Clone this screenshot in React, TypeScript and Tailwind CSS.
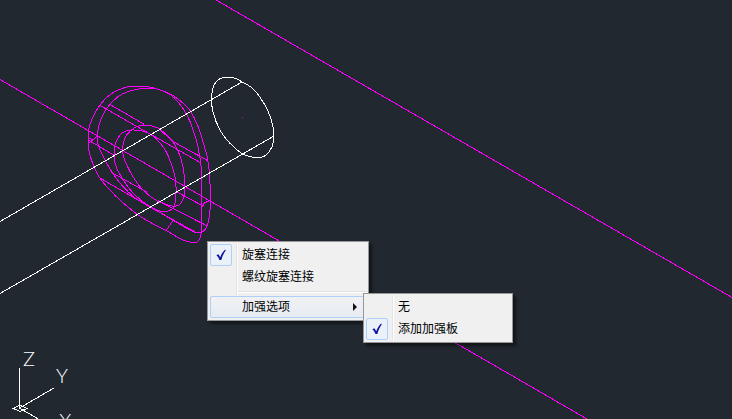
import React from "react";

type Point = [number, number];

/** Smooth closed curve through the given points (Catmull-Rom converted to Béziers). */
function smooth(points: Point[]): string {
  const n = points.length;
  const at = (i: number): Point => points[(i + n) % n];
  let d = `M${points[0][0]} ${points[0][1]}`;
  for (let i = 0; i < n; i++) {
    const [a, b, c, e] = [at(i - 1), at(i), at(i + 1), at(i + 2)];
    d += `C${b[0] + (c[0] - a[0]) / 6} ${b[1] + (c[1] - a[1]) / 6} ${c[0] - (e[0] - b[0]) / 6} ${c[1] - (e[1] - b[1]) / 6} ${c[0]} ${c[1]}`;
  }
  return d;
}

const backPlate: Point[] = [
  [88.5, 140], [89, 128], [93, 117], [100, 105], [111, 94], [125, 87.5], [135, 86.3], [147, 86.7],
  [159, 89.5], [171.5, 95.5], [183, 108.5], [190, 121.5], [196.5, 141], [200, 158], [201.4, 172],
  [201.4, 205], [201.4, 230], [200, 238], [196.5, 242.3], [191.5, 242.5], [181.5, 239.3],
  [166.5, 230.7], [155, 225], [138.3, 215], [121.7, 201.7], [108.3, 188.3], [100, 178.3],
  [95, 169.3], [91.5, 160], [88.8, 150],
];

const frontPlate: Point[] = [
  [97.4, 138], [98, 130], [100, 121.7], [106.5, 108.5], [118, 96.7], [128, 91.7], [141.7, 88.6],
  [155, 88.6], [170, 94], [178.3, 99.3], [190, 110.5], [198, 126.5], [203, 141.7], [207.5, 158.5],
  [209.4, 173], [210.4, 200], [209.3, 216.7], [206.7, 226.7], [201.7, 232.3], [193.3, 231.7],
  [175, 221.3], [150, 206.7], [135, 198], [121.7, 185], [111.7, 171.7], [105, 160], [98.5, 146],
];

const backHole: Point[] = [
  [114.3, 153.3], [115, 145], [120, 135], [126.7, 130.7], [134, 130], [141.7, 131], [151, 134.5],
  [161.7, 145], [168.3, 156], [175, 176.7], [176, 193], [174, 206.7], [169, 210.7],
  [161.7, 211.4], [150, 206.7], [135, 195], [123.3, 180], [115.5, 165],
];

const frontHole: Point[] = [
  [122.7, 151.7], [123.3, 143.3], [126.7, 135], [135, 127.5], [145, 125.4], [156.7, 127.5],
  [166.7, 135], [175, 145], [181, 159], [184.4, 176.7], [184.4, 193], [181, 203],
  [175, 206.4], [166.7, 204.5], [156.7, 200.7], [143, 190], [133, 176.7], [125, 161],
];

const boltEnd: Point[] = [
  [241.7, 81.7], [235, 78.2], [227.5, 77.2], [220, 78.7], [214, 85], [211.6, 97], [213, 112],
  [220, 130], [230, 143.3], [241.7, 153.3], [253, 157.3], [263, 156.8], [269.3, 151.7],
  [273.4, 141.7], [273, 127], [268.3, 111.7], [260, 97.3], [251.7, 87.7],
];

const plateEdges =
  "M100 105.5L151 134.5L200 162.5M110 104.5L144.5 124.5M159 129L173 141.5L207.7 160.7" +
  "M89 138L92 139.5M89 143L97.5 136M89 140.5L114.5 155.5M111.5 172.5L146.7 192M100 178L150 207L197 233" +
  "M176 191.5L203 206L205 202M202 207L204 203L210.5 200.5M158 200.7L206.7 225.7M173.3 220L166 230.7";

function Drawing() {
  return (
    <svg
      className="absolute inset-0 h-full w-full"
      viewBox="0 0 732 419"
      preserveAspectRatio="xMinYMin slice"
      fill="none"
      aria-hidden="true"
    >
      <g stroke="#ff00ff" shapeRendering="crispEdges">
        <path d="M216 0L732 297.5M0 79.5L587 419" />
        <path d={smooth(backPlate)} />
        <path d={smooth(frontPlate)} />
        <path d={smooth(backHole)} />
        <path d={smooth(frontHole)} />
        <path d={plateEdges} />
      </g>
      <g stroke="#ffffff" shapeRendering="crispEdges">
        <path d="M0 221.5L242 82M0 293.5L274 136" />
        <path d={smooth(boltEnd)} />
        <path d="M19.5 368V408M19.5 408L54 388M19.5 408L40 420M13.5 408.5L20 405L27 408.5L20 411.5Z" />
      </g>
      <rect x="242" y="117" width="1" height="1" fill="#c000c0" />
      <g fill="#ffffff" className="font-['Lato',sans-serif] text-[20px] font-light">
        <text x="23" y="366">Z</text>
        <text x="56" y="383">Y</text>
        <text x="59" y="428">X</text>
      </g>
    </svg>
  );
}

function Check() {
  return (
    <svg viewBox="0 0 20 20" className="size-5" aria-hidden="true">
      <path d="M5.4 10.2L7.4 9.2L9.2 12.2C10.4 9.2 12 6.6 14.2 4.6L14.8 5.2C12.8 8 11.4 11.2 10.3 15H8.5C7.8 13 6.8 11.4 5.4 10.2Z" fill="#0c12a1" />
    </svg>
  );
}

type ItemProps = { label: string; checked?: boolean; submenu?: boolean };

function MenuItem({ label, checked = false, submenu = false }: ItemProps) {
  return (
    <button
      type="button"
      role={submenu ? "menuitem" : "menuitemcheckbox"}
      aria-checked={submenu ? undefined : checked}
      aria-haspopup={submenu ? "menu" : undefined}
      aria-expanded={submenu ? true : undefined}
      className={
        submenu
          ? "relative flex h-[22px] w-full items-center rounded-xs border border-[#aecff7] bg-linear-to-b from-[#f0f1f3] to-[#e7ecf3] text-left"
          : "relative flex h-[22px] w-full items-center border border-transparent text-left"
      }
    >
      <span
        className={
          checked
            ? "-ml-px flex size-[22px] shrink-0 items-center justify-center rounded-xs border border-[#aecff7] bg-[#ebf1f9]"
            : "-ml-px size-[22px] shrink-0"
        }
      >
        {checked && <Check />}
      </span>
      <span className="ml-2.5 grow pb-0.5 whitespace-nowrap">{label}</span>
      {submenu && (
        <svg viewBox="0 0 4 8" className="mr-2 h-2 w-1 shrink-0" aria-hidden="true">
          <path d="M0 0L4 4L0 8Z" fill="#111111" />
        </svg>
      )}
    </button>
  );
}

type MenuProps = { label: string; className: string; children: React.ReactNode };

function Menu({ label, className, children }: MenuProps) {
  return (
    <div
      role="menu"
      aria-label={label}
      className={`absolute border border-[#979797] bg-[#f0f0f0] p-0.5 shadow-[3px_3px_3px_rgba(0,0,0,0.45)] ${className}`}
    >
      <span className="absolute inset-y-0.5 left-7 w-0.5 border-l border-[#e2e3e3] bg-white" />
      {children}
    </div>
  );
}

export default function App() {
  return (
    <main className="relative h-screen w-full overflow-hidden bg-[#212830] font-['Noto_Sans_CJK_SC',sans-serif] text-xs leading-5 text-black">
      <Drawing />
      <Menu label="旋塞连接" className="top-[241px] left-[207px] w-[162px]">
        <MenuItem label="旋塞连接" checked />
        <MenuItem label="螺纹旋塞连接" />
        <div role="separator" className="relative my-[3px] ml-7 h-0.5 border-t border-[#e0e0e0] bg-white" />
        <MenuItem label="加强选项" submenu />
      </Menu>
      <Menu label="加强选项" className="top-[293px] left-[363px] w-[150px]">
        <MenuItem label="无" />
        <MenuItem label="添加加强板" checked />
      </Menu>
    </main>
  );
}
